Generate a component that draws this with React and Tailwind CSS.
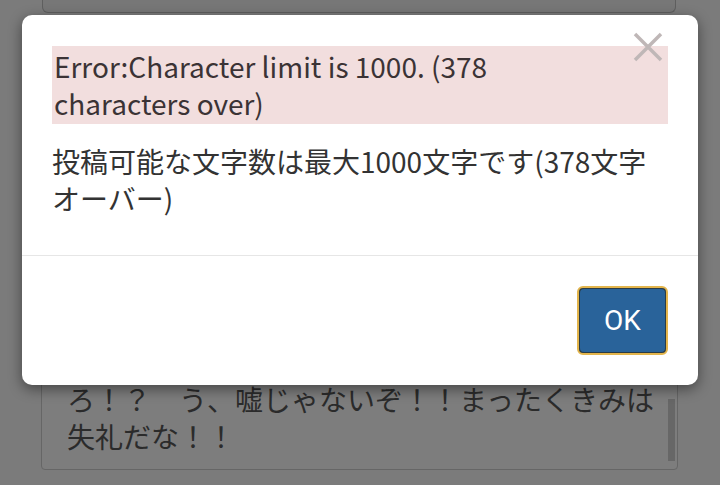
const jp = { fontFamily: '"Noto Sans CJK JP", "Noto Sans", sans-serif' };

function CloseIcon() {
  return (
    <svg width="30" height="30" viewBox="0 0 30 30" fill="none">
      <path d="M2 2 L28 28 M28 2 L2 28" stroke="#bfb7b7" strokeWidth="3.5" />
    </svg>
  );
}

function ErrorModal() {
  return (
    <div className="absolute left-[22px] top-[15px] w-[676px] h-[370px] bg-white rounded-[10px] shadow-[0_4px_14px_rgba(0,0,0,0.45)] flex flex-col">
      <div className="relative px-[30px] pt-[31px] pb-[38px] border-b border-[#e6e6e6]">
        <button className="absolute right-[35px] top-[17px] flex">
          <CloseIcon />
        </button>
        <div className="bg-[#f2dede] text-[#3b3335] text-[28px] leading-[37px] py-[2px] pl-[2px] pr-[44px] mb-[19px]">
          Error:Character limit is 1000. (378 characters over)
        </div>
        <p className="text-[#333] text-[28px] leading-[37px] pr-[20px]">
          投稿可能な文字数は最大1000文字です(378文字オーバー)
        </p>
      </div>
      <div className="flex-1 flex items-center justify-end px-[30px]">
        <button className="w-[91px] h-[69px] rounded-[6px] border-2 border-[#e3b54c] bg-[#2b3c45] p-[1px]">
          <span
            className="flex items-center justify-center w-full h-full rounded-[4px] bg-[#29639a] text-white text-[28px]"
            style={{ fontFamily: 'Roboto, "Noto Sans", sans-serif' }}
          >
            OK
          </span>
        </button>
      </div>
    </div>
  );
}

export default function App() {
  return (
    <div
      className="relative w-[720px] h-[485px] overflow-hidden bg-[#7b7b7b] flex flex-col"
      style={jp}
    >
      <div className="ml-[42px] mr-[44px] h-[13px] bg-[#777] border-x border-b border-[#5f5f5f] rounded-b-[6px]" />
      <div className="mt-auto mb-[15px] ml-[41px] mr-[42px] h-[170px] border border-[#666] rounded-[4px] bg-[#7d7d7d] flex">
        <div className="flex-1 flex flex-col justify-end pl-[25px] pb-[14px] text-[28px] leading-[37px] text-[#2b2b2b]">
          <div>ろ！？　う、嘘じゃないぞ！！まったくきみは</div>
          <div>失礼だな！！</div>
        </div>
        <div className="w-[7px] mr-[2px] mb-[8px] self-end h-[62px] bg-[#676767]" />
      </div>
      <ErrorModal />
    </div>
  );
}
